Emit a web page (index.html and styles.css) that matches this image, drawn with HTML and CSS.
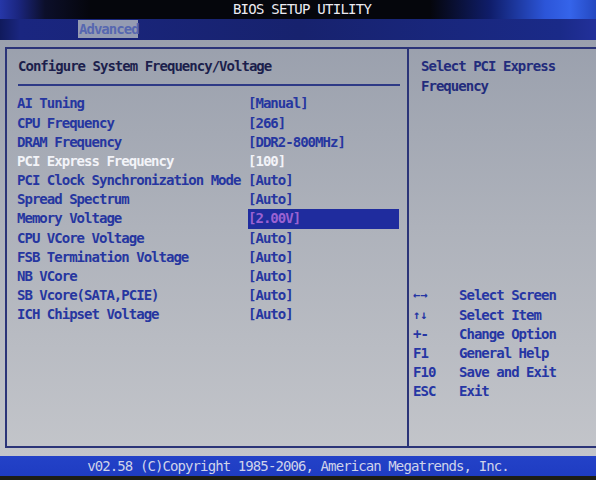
FILE: index.html
```html
<!DOCTYPE html>
<html>
<head>
<meta charset="utf-8">
<link rel="stylesheet" href="styles.css">
</head>
<body>
<div class="screen">
  <header class="titlebar"><span class="title">BIOS SETUP UTILITY</span></header>
  <nav class="tabbar"><span class="tab">Advanced</span></nav>
  <main class="main">
    <div class="frame">
      <section class="left">
        <h1 class="heading">Configure System Frequency/Voltage</h1>
        <div class="rule"></div>
        <div class="rows">
          <span class="lbl">AI Tuning</span><span class="val">[Manual]</span>
          <span class="lbl">CPU Frequency</span><span class="val">[266]</span>
          <span class="lbl">DRAM Frequency</span><span class="val">[DDR2-800MHz]</span>
          <span class="lbl cur">PCI Express Frequency</span><span class="val cur">[100]</span>
          <span class="lbl">PCI Clock Synchronization Mode</span><span class="val">[Auto]</span>
          <span class="lbl">Spread Spectrum</span><span class="val">[Auto]</span>
          <span class="lbl">Memory Voltage</span><span class="val sel">[2.00V]</span>
          <span class="lbl">CPU VCore Voltage</span><span class="val">[Auto]</span>
          <span class="lbl">FSB Termination Voltage</span><span class="val">[Auto]</span>
          <span class="lbl">NB VCore</span><span class="val">[Auto]</span>
          <span class="lbl">SB Vcore(SATA,PCIE)</span><span class="val">[Auto]</span>
          <span class="lbl">ICH Chipset Voltage</span><span class="val">[Auto]</span>
        </div>
      </section>
      <aside class="right">
        <div class="help">
          <div class="ln">Select PCI Express</div>
          <div class="ln">Frequency</div>
        </div>
        <div class="keys">
          <span class="k arrows">←→</span><span class="d">Select Screen</span>
          <span class="k arrows">↑↓</span><span class="d">Select Item</span>
          <span class="k">+-</span><span class="d">Change Option</span>
          <span class="k">F1</span><span class="d">General Help</span>
          <span class="k">F10</span><span class="d">Save and Exit</span>
          <span class="k">ESC</span><span class="d">Exit</span>
        </div>
      </aside>
    </div>
  </main>
  <footer class="footer">v02.58 (C)Copyright 1985-2006, American Megatrends, Inc.</footer>
  <div class="bezel"></div>
</div>
</body>
</html>
```
FILE: styles.css
```css
* { box-sizing: border-box; margin: 0; padding: 0; }
html, body { background: #111; }
body { margin: 0; width: 596px; height: 480px; overflow: hidden; }
.screen {
  width: 596px;
  height: 480px;
  display: flex;
  flex-direction: column;
  font-family: "DejaVu Sans Mono", "Liberation Mono", monospace;
  font-weight: bold;
  font-size: 14px;
  letter-spacing: -0.98px;
  line-height: 19.2px;
}
.titlebar {
  height: 19px;
  display: flex;
  justify-content: center;
  align-items: center;
  background:
    linear-gradient(90deg, #2637a8 0px, #1b2680 18px, #0c0f2a 45px, #05060c 90px, #05060c 430px, #0f1d6a 490px, #2c55d8 545px, #3564ea 570px, #2448c0 596px);
  color: #ecebf2;
  padding-left: 8px;
}
.title { font-weight: normal; letter-spacing: -0.75px; }
.tabbar {
  height: 21px;
  background: linear-gradient(90deg, #101a5c 0px, #1a2680 20px, #17226e 300px, #1a2a88 560px, #22309a 596px);
  padding: 1px 0 2px 78px;
  display: flex;
}
.tab {
  display: block;
  width: 60px;
  height: 18px;
  line-height: 18px;
  background: #959cb2;
  color: #5667b0;
  padding-left: 1px;
}
.main {
  height: 416px;
  background: linear-gradient(180deg, #9aa0ad 0%, #aeb2bb 45%, #c3c5ca 100%);
  padding: 7px 0 8px 5px;
}
.frame {
  height: 401px;
  display: grid;
  grid-template-columns: 402px 1fr;
  border-top: 2px solid #2b3478;
  border-left: 2px solid #2b3478;
  border-bottom: 2px solid #2b3478;
}
.left {
  border-right: 2px solid #2b3478;
  padding: 8.4px 0 0 10px;
}
.heading {
  font-size: inherit;
  font-weight: bold;
  height: 19.2px;
  color: #1c1f4c;
  padding-left: 1px;
}
.rule {
  height: 2px;
  background: #2e3a86;
  margin: 7.4px 7px 8.4px 1px;
}
.rows {
  display: grid;
  grid-template-columns: 231px 151px;
  grid-auto-rows: 19.2px;
  color: #2636a0;
}
.lbl, .val { white-space: nowrap; }
.cur { color: #f2f3f8; }
.sel { background: #1f2c9e; color: #9a62d2; }
.right {
  display: flex;
  flex-direction: column;
  justify-content: space-between;
  padding: 8.4px 0 44.4px 4px;
}
.help { color: #232c7c; padding-left: 8px; }
.ln { height: 19.2px; white-space: nowrap; }
.keys {
  display: grid;
  grid-template-columns: 46px 1fr;
  grid-auto-rows: 19.2px;
  color: #2636a4;
}
.k { white-space: nowrap; }
.arrows { font-size: 12px; letter-spacing: 0; }
.d { white-space: nowrap; }
.footer {
  height: 20px;
  line-height: 20px;
  background: linear-gradient(180deg, #2342c8 0%, #1f3cc2 100%);
  color: #cfd3ea;
  text-align: center;
  font-weight: normal;
  letter-spacing: -0.9px;
}
.bezel { flex: 1; background: #1c1d16; }
```
